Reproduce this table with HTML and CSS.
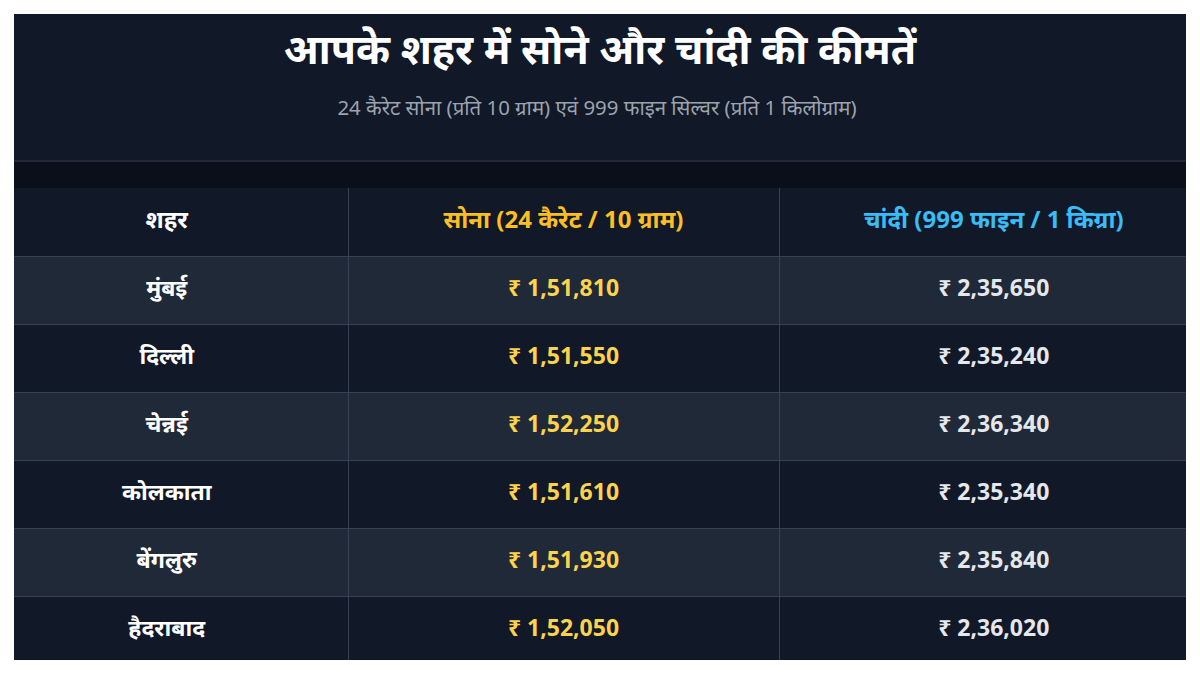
FILE: index.html
```html
<!DOCTYPE html>
<html lang="hi">
<head>
<meta charset="utf-8">
<title>सोने और चांदी की कीमतें</title>
<link rel="stylesheet" href="styles.css">
</head>
<body>
<div class="card">
  <header class="head">
    <h1 class="title">आपके शहर में सोने और चांदी की कीमतें</h1>
    <p class="sub">24 कैरेट सोना (प्रति 10 ग्राम) एवं 999 फाइन सिल्वर (प्रति 1 किलोग्राम)</p>
  </header>
  <div class="band"></div>
  <table class="prices">
    <colgroup>
      <col class="c1"><col class="c2"><col class="c3">
    </colgroup>
    <thead>
      <tr>
        <th class="city">शहर</th>
        <th class="gold">सोना (24 कैरेट / 10 ग्राम)</th>
        <th class="silver">चांदी (999 फाइन / 1 किग्रा)</th>
      </tr>
    </thead>
    <tbody>
      <tr><td class="city">मुंबई</td><td class="gold">₹ 1,51,810</td><td class="silv">₹ 2,35,650</td></tr>
      <tr><td class="city">दिल्ली</td><td class="gold">₹ 1,51,550</td><td class="silv">₹ 2,35,240</td></tr>
      <tr><td class="city">चेन्नई</td><td class="gold">₹ 1,52,250</td><td class="silv">₹ 2,36,340</td></tr>
      <tr><td class="city">कोलकाता</td><td class="gold">₹ 1,51,610</td><td class="silv">₹ 2,35,340</td></tr>
      <tr><td class="city">बेंगलुरु</td><td class="gold">₹ 1,51,930</td><td class="silv">₹ 2,35,840</td></tr>
      <tr><td class="city">हैदराबाद</td><td class="gold">₹ 1,52,050</td><td class="silv">₹ 2,36,020</td></tr>
    </tbody>
  </table>
</div>
</body>
</html>
```
FILE: styles.css
```css
* { box-sizing: border-box; }
html, body { margin: 0; padding: 0; background: #ffffff; }
body {
  padding: 14px;
  font-family: "Noto Sans", "Open Sans", sans-serif;
}
.card {
  width: 1172px;
  background: #111827;
  color: #ffffff;
}
.head {
  height: 148px;
  border-bottom: 2px solid #1f2937;
  text-align: center;
  padding-top: 8px;
}
.title {
  margin: 0;
  font-size: 41px;
  font-weight: 700;
  line-height: 52px;
  color: #ffffff;
}
.sub {
  margin: 19px 0 0;
  padding-right: 6px;
  font-size: 20.4px;
  line-height: 28px;
  color: #9ca3af;
}
.band {
  height: 26px;
  background: #0b0f19;
}
.prices {
  width: 100%;
  border-collapse: collapse;
  table-layout: fixed;
}
.c1 { width: 334px; }
.c2 { width: 431px; }
.c3 { width: 407px; }
.prices th, .prices td {
  height: 68px;
  padding: 0 12px 6px;
  text-align: center;
  vertical-align: middle;
  font-weight: 700;
  border-left: 1px solid #374151;
  border-top: 1px solid #374151;
}
.prices th.city, .prices td.city {
  border-left: none;
  padding-left: 12px;
  padding-right: 40px;
}
.prices th.silver, .prices td.silv {
  padding-left: 34px;
  padding-right: 12px;
}
.prices thead th { border-top: none; font-size: 24px; }
.prices tbody td { font-size: 23px; }
.prices tbody tr:nth-child(odd) { background: #1f2937; }
.prices tbody tr:nth-child(even) { background: #111827; }
.prices tbody tr:last-child td { height: 64px; padding-bottom: 2px; }
th.city, td.city { color: #ffffff; }
th.gold { color: #fbbf24; }
td.gold { color: #fcd34d; }
th.silver { color: #38bdf8; }
td.silv { color: #e5e7eb; }
```
